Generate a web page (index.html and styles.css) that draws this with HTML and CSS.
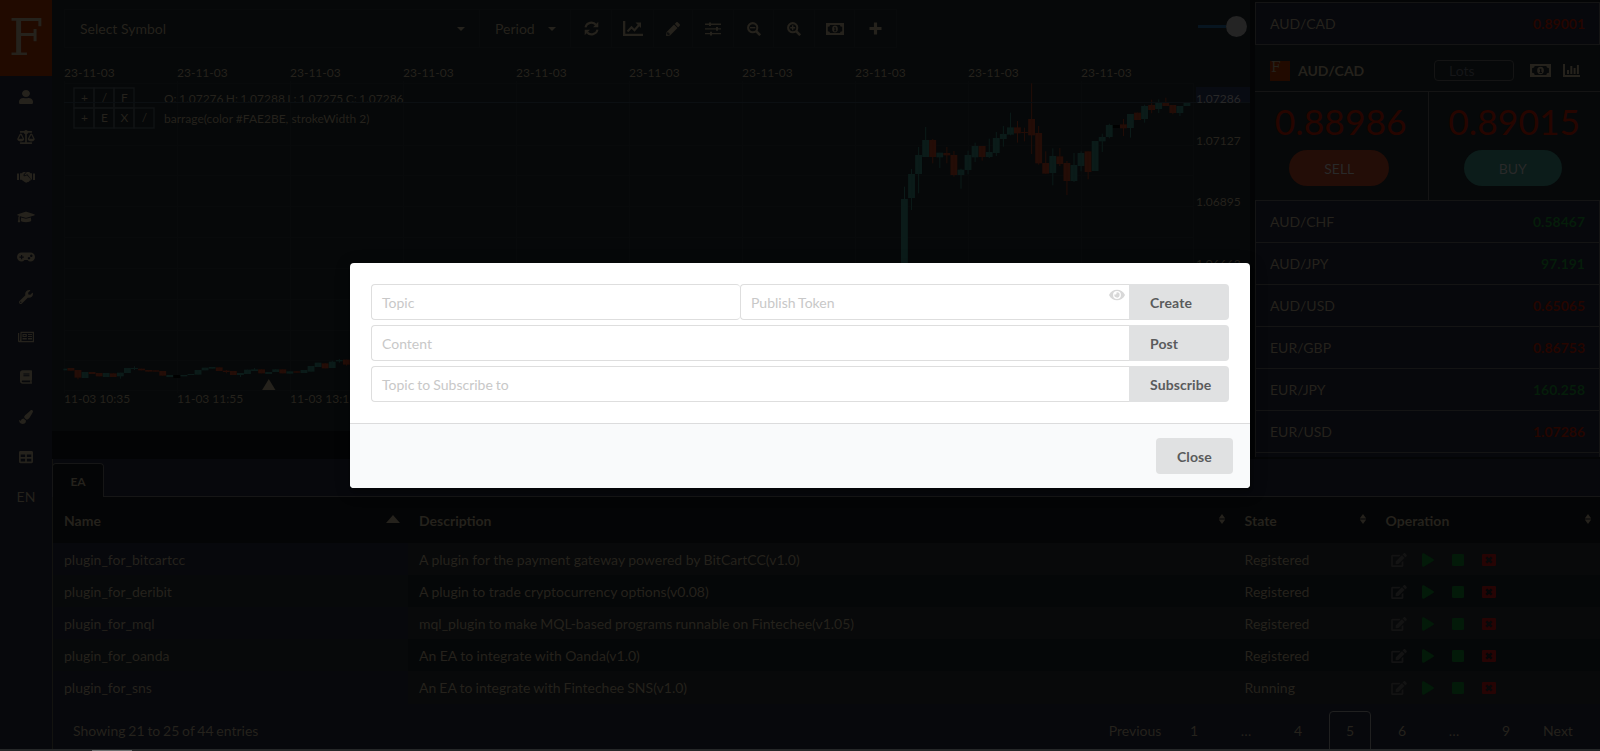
FILE: index.html
```html
<!DOCTYPE html>
<html lang="en">
<head>
<meta charset="utf-8">
<title>Fintechee</title>
<link rel="stylesheet" href="styles.css">
</head>
<body>
<svg class="defs" width="0" height="0">
  <symbol id="money" viewBox="0 0 20 14" preserveAspectRatio="none"><path fill-rule="evenodd" d="M0 0h20v14H0zM4.500 2.200Q4.500 4.500 2 4.500v5Q4.500 9.500 4.500 11.800h11Q15.500 9.500 18 9.500v-5Q15.500 4.500 15.500 2.200zM10 3a3.200 4 0 0 1 0 8a3.200 4 0 0 1 0-8zM9 5v1h.6v2.600H9v1h2.400v-1h-.6V5z"/></symbol>
  <symbol id="edit" viewBox="0 0 576 512"><path d="M402.600 83.200l90.200 90.200c3.800 3.800 3.800 10 0 13.800L274.400 405.600l-92.800 10.300c-12.400 1.400-22.900-9.100-21.500-21.500l10.300-92.800L388.800 83.200c3.800-3.800 10-3.800 13.800 0zm162-22.900l-48.800-48.800c-15.200-15.200-39.900-15.200-55.200 0l-35.400 35.400c-3.800 3.800-3.800 10 0 13.800l90.200 90.200c3.800 3.800 10 3.800 13.800 0l35.400-35.400c15.200-15.300 15.200-40 0-55.200zM384 346.200V448H64V128h229.800c3.200 0 6.200-1.300 8.500-3.500l40-40c7.600-7.600 2.200-20.500-8.500-20.500H48C21.500 64 0 85.500 0 112v352c0 26.500 21.500 48 48 48h352c26.500 0 48-21.500 48-48V306.200c0-10.700-12.900-16-20.500-8.500l-40 40c-2.200 2.300-3.500 5.300-3.500 8.500z"/></symbol>
  <symbol id="play" viewBox="0 0 448 512"><path d="M424.400 214.700L72.400 6.600C43.800-10.300 0 6.100 0 47.900V464c0 37.500 40.700 60.100 72.400 41.300l352-208c31.400-18.500 31.500-64.100 0-82.600z"/></symbol>
  <symbol id="stop" viewBox="0 0 12 12"><rect width="12" height="12" rx="1.200"/></symbol>
  <symbol id="close" viewBox="0 0 14 12"><path fill-rule="evenodd" d="M1 0h12a1 1 0 0 1 1 1v10a1 1 0 0 1-1 1H1a1 1 0 0 1-1-1V1a1 1 0 0 1 1-1zM5.200 2.500 3.500 4.200 5.300 6 3.500 7.800 5.200 9.500 7 7.700 8.800 9.500 10.500 7.800 8.700 6 10.500 4.200 8.800 2.500 7 4.300z"/></symbol>
  <symbol id="sort" viewBox="0 0 8 10"><path d="M4 0 7.300 4.500H.7zM4 10 .7 5.500h6.600z"/></symbol>
</svg>

<div class="app">
  <nav class="sidebar">
    <div class="logo">F</div>
    <div class="nav-item"><svg width="14" height="14" viewBox="0 0 448 448" preserveAspectRatio="none"><path transform="scale(1 .875)" d="M224 256c70.700 0 128-57.300 128-128S294.700 0 224 0 96 57.300 96 128s57.300 128 128 128zm89.600 32h-16.700c-22.200 10.200-46.900 16-72.900 16s-50.600-5.800-72.900-16h-16.700C60.200 288 0 348.200 0 422.400V464c0 26.500 21.500 48 48 48h352c26.500 0 48-21.500 48-48v-41.600c0-74.200-60.200-134.400-134.400-134.400z"/></svg></div>
    <div class="nav-item"><svg width="18" height="14" viewBox="0 0 640 512"><path d="M256 336h-.02c0-16.180 1.340-8.730-85.050-181.510-17.650-35.290-68.190-35.360-85.870 0C-2.060 328.750.02 320.330.02 336H0c0 44.180 57.310 80 128 80s128-35.820 128-80zM128 176l72 144H56l72-144zm511.980 160c0-16.180 1.340-8.730-85.050-181.510-17.650-35.290-68.190-35.360-85.870 0-87.120 174.260-85.040 165.840-85.040 181.510H384c0 44.180 57.310 80 128 80s128-35.820 128-80h-.02zM440 320l72-144 72 144H440zm88 128H352V153.250c23.510-10.290 41.160-31.480 46.390-57.250H528c8.840 0 16-7.160 16-16V48c0-8.840-7.160-16-16-16H383.640C369.040 12.680 346.090 0 320 0s-49.040 12.680-63.640 32H112c-8.840 0-16 7.160-16 16v32c0 8.840 7.160 16 16 16h129.610c5.230 25.760 22.870 46.960 46.390 57.250V448H112c-8.840 0-16 7.160-16 16v32c0 8.840 7.160 16 16 16h416c8.840 0 16-7.160 16-16v-32c0-8.840-7.160-16-16-16z"/></svg></div>
    <div class="nav-item"><svg width="18" height="14" viewBox="0 0 18 14"><path d="M0 3.500h2V10H0zM16 3.500h2V10h-2zM3 3.300h1.600L6.300 2H9L6.600 4.400Q6 6.200 7.800 6.300L10 5.200l3.800 4.100Q14 11 12.500 10.800 12 12.400 10.700 11.900 9.500 13.300 8 12.300L4.500 9.700H3zM9.800 2h2.400l1.500 1.300H15v6.400h-.5L10.300 4.200 7.900 5.500Q7.200 5.500 7.600 4.600z"/></svg></div>
    <div class="nav-item"><svg width="18" height="14" viewBox="0 0 640 512"><path d="M622.340 153.200L343.400 67.500c-15.200-4.670-31.600-4.670-46.790 0L17.660 153.200c-23.540 7.230-23.540 38.360 0 45.590l48.630 14.940c-10.670 13.190-17.230 29.280-17.880 46.900C38.780 266.150 32 276.110 32 288c0 10.780 5.680 19.850 13.860 25.650L20.330 428.530C18.110 438.520 25.710 448 35.940 448h56.110c10.240 0 17.840-9.480 15.620-19.470L82.140 313.650C90.320 307.850 96 298.780 96 288c0-11.570-6.470-21.250-15.660-26.870.76-15.020 8.440-28.300 20.690-36.720L296.600 284.500c9.060 2.780 26.440 6.250 46.790 0l278.950-85.700c23.550-7.240 23.550-38.360 0-45.600zM352.790 315.090c-28.530 8.760-52.840 3.920-65.590 0l-145.020-44.550L128 384c0 35.350 85.960 64 192 64s192-28.650 192-64l-14.180-113.470-145.030 44.560z"/></svg></div>
    <div class="nav-item"><svg width="18" height="14" viewBox="0 0 18 14"><path fill-rule="evenodd" d="M4.500 2.500h9a4.500 4.500 0 0 1 0 9q-1.900 0-3-1.500h-3q-1.100 1.500-3 1.500a4.500 4.500 0 0 1 0-9zM4 4.900v1.600H2.400v1.200H4v1.600h1.200V7.700h1.600V6.500H5.200V4.900zM12 7a1.200 1.200 0 1 0 .01 0zM14.300 4.600a1.200 1.200 0 1 0 .01 0z"/></svg></div>
    <div class="nav-item"><svg width="14" height="14" viewBox="0 0 512 512"><path d="M507.730 109.100c-2.240-9.030-13.540-12.090-20.120-5.510l-74.360 74.360-67.880-11.310-11.310-67.880 74.360-74.360c6.620-6.620 3.430-17.900-5.660-20.160-47.380-11.740-99.550.91-136.580 37.930-39.640 39.640-50.550 97.100-34.050 147.200L18.740 402.760c-24.990 24.990-24.990 65.510 0 90.500 24.990 24.990 65.510 24.990 90.500 0l213.210-213.210c50.120 16.710 107.470 5.680 147.370-34.220 37.070-37.070 49.700-89.320 37.910-136.730zM64 472c-13.250 0-24-10.750-24-24 0-13.260 10.750-24 24-24s24 10.740 24 24c0 13.250-10.750 24-24 24z"/></svg></div>
    <div class="nav-item"><svg width="16" height="14" viewBox="0 0 16 14"><path fill-rule="evenodd" d="M2.500 1.800H16v10.400H1.200Q0 12.200 0 11V3h1.200v7.500q.3.800.8 0zM3.600 3v8h11.200V3zM4.500 4h4.300v3H4.500zM5.600 5v1h2V5zM10 4h4v1.100h-4zM10 6h4v1.100h-4zM4.500 8.100h4.300v1.300H4.500zM10 8.100h4v1.300h-4z"/></svg></div>
    <div class="nav-item"><svg width="12" height="14" viewBox="0 0 448 512"><path d="M448 360V24c0-13.300-10.700-24-24-24H96C43 0 0 43 0 96v320c0 53 43 96 96 96h328c13.300 0 24-10.700 24-24v-16c0-7.500-3.500-14.300-8.900-18.700-4.200-15.400-4.200-59.300 0-74.700 5.400-4.300 8.900-11.100 8.900-18.600zM128 134c0-3.300 2.700-6 6-6h212c3.300 0 6 2.700 6 6v20c0 3.300-2.700 6-6 6H134c-3.300 0-6-2.700-6-6v-20zm0 64c0-3.300 2.700-6 6-6h212c3.300 0 6 2.700 6 6v20c0 3.300-2.700 6-6 6H134c-3.300 0-6-2.700-6-6v-20zm253.400 250H96c-17.700 0-32-14.300-32-32 0-17.600 14.400-32 32-32h285.400c-1.900 17.100-1.900 46.900 0 64z"/></svg></div>
    <div class="nav-item"><svg width="14" height="14" viewBox="0 0 512 512"><path d="M167.020 309.340c-40.120 2.580-76.530 17.860-97.190 72.300-2.350 6.210-8 9.980-14.590 9.980-11.110 0-45.460-27.670-55.250-34.350C0 439.620 37.930 512 128 512c75.860 0 128-43.770 128-120.190 0-3.110-.65-6.080-.97-9.130l-88.010-73.340zM457.890 0c-15.160 0-29.370 6.710-40.210 16.450C213.270 199.050 192 203.340 192 257.090c0 13.700 3.250 26.760 8.730 38.700l63.820 53.180c7.210 1.800 14.640 3.030 22.390 3.030 62.110 0 98.110-45.470 211.160-256.460 7.380-14.350 13.900-29.850 13.900-45.990C512 20.640 486 0 457.890 0z"/></svg></div>
    <div class="nav-item"><svg width="14" height="14" viewBox="0 0 512 512"><path d="M464 32H48C21.490 32 0 53.490 0 80v352c0 26.510 21.490 48 48 48h416c26.510 0 48-21.490 48-48V80c0-26.510-21.490-48-48-48zM224 416H64v-96h160v96zm0-160H64v-96h160v96zm224 160H288v-96h160v96zm0-160H288v-96h160v96z"/></svg></div>
    <div class="nav-item">EN</div>
  </nav>

  <div class="main">
    <div class="top">
      <section class="chart-panel">
        <div class="toolbar">
          <div class="tools">
            <div class="tool symbol"><span>Select Symbol</span><i class="caret"></i></div>
            <div class="tool period"><span>Period</span><i class="caret"></i></div>
            <div class="tool w41"><svg width="15" height="15" viewBox="0 0 15 15"><path class="line" stroke-width="2.100" d="M1.500 6.400A6 5.800 0 0 1 12 3.800M13.500 8.600A6 5.800 0 0 1 3 11.200"/><path d="M14.300.8v5.400H9zM.7 14.200V8.800H6z"/></svg></div>
            <div class="tool w42"><svg width="20" height="15" viewBox="0 0 20 15"><path d="M0 0h2.300v12.700H20V15H0zM12.500 1.500H18V7z"/><path class="line" stroke-width="2.200" d="M4.500 10.500 8.500 6.300 11.500 9.200 16 4"/></svg></div>
            <div class="tool w39"><svg width="14" height="14" viewBox="0 0 512 512"><path d="M497.900 142.100l-46.100 46.100c-4.700 4.700-12.300 4.700-17 0l-111-111c-4.700-4.700-4.700-12.300 0-17l46.100-46.100c18.700-18.700 49.100-18.700 67.900 0l60.100 60.100c18.800 18.700 18.800 49.100 0 67.900zM284.200 99.800L21.600 362.400.4 483.900c-2.900 16.400 11.400 30.600 27.800 27.800l121.500-21.300 262.600-262.600c4.700-4.700 4.700-12.300 0-17l-111-111c-4.800-4.700-12.400-4.700-17.100 0zM88 424h48v36.300l-64.500 11.300-31.100-31.100L51.700 376H88z"/></svg></div>
            <div class="tool w41"><svg width="16" height="14" viewBox="0 0 16 14"><path d="M0 1.500h16v1.400H0zM0 6.200h16v1.400H0zM0 10.900h16v1.400H0zM4 .4h2V4H4zM11 5h2v3.800h-2zM5 9.700h2v3.800H5z"/></svg></div>
            <div class="tool w40"><svg width="14" height="14" viewBox="0 0 14 14"><circle class="line" cx="5.700" cy="5.700" r="4.600" stroke-width="2.100"/><path class="line" stroke-width="2.600" d="M9 9l4.200 4.200"/><path d="M3 5h5.400v1.400H3z"/></svg></div>
            <div class="tool w41"><svg width="14" height="14" viewBox="0 0 14 14"><circle class="line" cx="5.700" cy="5.700" r="4.600" stroke-width="2.100"/><path class="line" stroke-width="2.600" d="M9 9l4.200 4.200"/><path d="M3.200 5H5V3.200h1.400V5h1.800v1.400H6.400v1.800H5V6.400H3.200z"/></svg></div>
            <div class="tool w40"><svg width="18" height="12"><use href="#money"/></svg></div>
            <div class="tool w41"><svg width="13" height="13" viewBox="0 0 13 13"><path d="M4.900.5h3.200v4.400h4.400v3.200H8.100v4.400H4.900V8.100H.5V4.900h4.400z"/></svg></div>
          </div>
          <div class="slider"><span class="track"></span><span class="thumb"></span></div>
        </div>
        <svg class="chart" id="chart" width="1198" height="374" viewBox="52 57 1198 374"></svg>
      </section>

      <aside class="quotes">
        <div class="quote"><span>AUD/CAD</span><b class="down">0.89001</b></div>
        <div class="ticket-head">
          <span class="mini-logo">F</span><b class="pair">AUD/CAD</b>
          <div class="lots">Lots</div>
          <svg class="cash" width="21" height="13"><use href="#money"/></svg>
          <svg class="bars" width="17" height="13" viewBox="0 0 17 13"><path d="M0 0h2v11h15v2H0zM4 6h2v4H4zM7.300 2h2v8h-2zM10.600 4h2v6h-2zM13.900 1h2v9h-2z"/></svg>
        </div>
        <div class="ticket">
          <div class="side sell"><span class="price">0.88986</span><span class="pill">SELL</span></div>
          <div class="side buy"><span class="price">0.89015</span><span class="pill">BUY</span></div>
        </div>
        <div class="quote"><span>AUD/CHF</span><b class="up">0.58467</b></div>
        <div class="quote"><span>AUD/JPY</span><b class="up">97.191</b></div>
        <div class="quote"><span>AUD/USD</span><b class="down">0.65065</b></div>
        <div class="quote"><span>EUR/GBP</span><b class="down">0.86753</b></div>
        <div class="quote"><span>EUR/JPY</span><b class="up">160.258</b></div>
        <div class="quote"><span>EUR/USD</span><b class="down">1.07286</b></div>
        <div class="quote rest"></div>
      </aside>
    </div>

    <section class="bottom">
      <div class="tabs"><div class="tab">EA</div><div class="tab-line"></div></div>
      <div class="table">
        <div class="row head">
          <div>Name<i class="asc"></i></div>
          <div>Description<svg width="8" height="10"><use href="#sort"/></svg></div>
          <div>State<svg width="8" height="10"><use href="#sort"/></svg></div>
          <div>Operation<svg width="8" height="10"><use href="#sort"/></svg></div>
        </div>
        <div class="row"><div>plugin_for_bitcartcc</div><div>A plugin for the payment gateway powered by BitCartCC(v1.0)</div><div>Registered</div><div class="ops"><svg class="e"><use href="#edit"/></svg><svg class="p"><use href="#play"/></svg><svg class="s"><use href="#stop"/></svg><svg class="c"><use href="#close"/></svg></div></div>
        <div class="row"><div>plugin_for_deribit</div><div>A plugin to trade cryptocurrency options(v0.08)</div><div>Registered</div><div class="ops"><svg class="e"><use href="#edit"/></svg><svg class="p"><use href="#play"/></svg><svg class="s"><use href="#stop"/></svg><svg class="c"><use href="#close"/></svg></div></div>
        <div class="row"><div>plugin_for_mql</div><div class="tight">mql_plugin to make MQL-based programs runnable on Fintechee(v1.05)</div><div>Registered</div><div class="ops"><svg class="e"><use href="#edit"/></svg><svg class="p"><use href="#play"/></svg><svg class="s"><use href="#stop"/></svg><svg class="c"><use href="#close"/></svg></div></div>
        <div class="row"><div>plugin_for_oanda</div><div>An EA to integrate with Oanda(v1.0)</div><div>Registered</div><div class="ops"><svg class="e"><use href="#edit"/></svg><svg class="p"><use href="#play"/></svg><svg class="s"><use href="#stop"/></svg><svg class="c"><use href="#close"/></svg></div></div>
        <div class="row"><div>plugin_for_sns</div><div class="tight">An EA to integrate with Fintechee SNS(v1.0)</div><div>Running</div><div class="ops"><svg class="e"><use href="#edit"/></svg><svg class="p"><use href="#play"/></svg><svg class="s"><use href="#stop"/></svg><svg class="c"><use href="#close"/></svg></div></div>
      </div>
      <div class="table-foot">
        <span class="info">Showing 21 to 25 of 44 entries</span>
        <div class="pages"><span class="prev">Previous</span><span>1</span><span>…</span><span>4</span><span class="current">5</span><span>6</span><span>…</span><span>9</span><span class="next">Next</span></div>
      </div>
    </section>
  </div>
</div>
<div class="scrollbar"><i></i></div>

<div class="dimmer">
  <div class="modal">
    <div class="content">
      <div class="field-row"><div class="input topic">Topic</div><div class="input token">Publish Token<svg width="16" height="14" viewBox="0 0 576 512"><path d="M572.520 241.400C518.290 135.590 410.930 64 288 64S57.680 135.640 3.480 241.410a32.350 32.350 0 0 0 0 29.190C57.710 376.410 165.070 448 288 448s230.320-71.640 284.520-177.410a32.350 32.350 0 0 0 0-29.190zM288 400a144 144 0 1 1 144-144 143.930 143.930 0 0 1-144 144zm0-240a95.310 95.310 0 0 0-25.310 3.790 47.850 47.850 0 0 1-66.900 66.900A95.780 95.780 0 1 0 288 160z"/></svg></div><div class="button">Create</div></div>
      <div class="field-row"><div class="input">Content</div><div class="button">Post</div></div>
      <div class="field-row"><div class="input">Topic to Subscribe to</div><div class="button">Subscribe</div></div>
    </div>
    <div class="actions"><div class="button close">Close</div></div>
  </div>
</div>
<script src="chart.js"></script>
</body>
</html>
```

FILE: styles.css
```css
* { box-sizing: border-box; }
html, body { height: 751px; overflow: hidden; }
body {
  margin: 0;
  display: flex;
  flex-direction: column;
  background: #030405;
  color: #25221c;
  font: 14px/18px Lato, "Liberation Sans", sans-serif;
}
svg { display: block; fill: currentColor; flex: none; }
.defs { position: absolute; }
.line { fill: none; stroke: currentColor; }

.app { display: flex; height: 749px; }
.scrollbar { height: 2px; background: #252728; padding: 1px 0 0 92px; }
.scrollbar i { display: block; width: 40px; height: 1px; background: #6c6e6f; }

.sidebar { width: 52px; background: #07080c; flex: none; }
.logo {
  height: 76px;
  margin-bottom: 1px;
  background: #210a00;
  font: 50px/76px "DejaVu Serif", serif;
  text-align: center;
}
.nav-item { height: 40px; display: flex; align-items: center; justify-content: center; }

.main { flex: 1; display: flex; flex-direction: column; min-width: 0; }
.top { display: flex; height: 459px; justify-content: space-between; }
.chart-panel { width: 1198px; height: 431px; background: #060809; }
.toolbar { height: 57px; padding: 9px 3px 0 12px; display: flex; justify-content: space-between; }
.tools { display: flex; height: 39px; border: 1px solid #080a0b; }
.tool { display: flex; align-items: center; justify-content: center; border-right: 1px solid #080a0b; }
.tool:last-child { border-right: 0; }
.symbol { width: 415px; justify-content: space-between; padding: 0 14px 0 15px; }
.period { width: 91px; justify-content: space-between; padding: 0 14px 0 15px; }
.caret { border: 4px solid transparent; border-top-color: currentColor; border-bottom: 0; }
.w39 { width: 39px; } .w40 { width: 40px; } .w41 { width: 41px; } .w42 { width: 42px; }
.slider { display: flex; align-items: center; height: 35px; }
.track { width: 28px; height: 3px; background: #071520; }
.thumb { width: 21px; height: 21px; border-radius: 50%; background: #242424; }

.chart text { font-size: 12px; fill: #25221c; }
.chart .tag { fill: #282828; }
.chart .ohlc { word-spacing: -0.75px; }
.grid { stroke: #080a0b; }
.rise { fill: #0b1b19; } .fall { fill: #240d07; } .flat { fill: #000; }
.key { fill: none; stroke: #111315; stroke-width: 1.4px; }

.quotes { width: 345px; padding-top: 2px; display: flex; flex-direction: column; background: #040506; overflow: hidden; }
.quote {
  height: 42px;
  flex: none;
  display: flex;
  align-items: center;
  justify-content: space-between;
  padding: 0 14px;
  border: 1px solid #141414;
  border-bottom: 0;
  background: #07080c;
}
.quote.rest { height: 5px; }
.up { color: #051d0a; }
.down { color: #250500; }
.ticket-head {
  height: 47px;
  flex: none;
  display: flex;
  align-items: center;
  padding: 5px 20px 0 15px;
  border-top: 1px solid #141414;
  background: #060809;
}
.mini-logo { width: 20px; height: 20px; background: #210a00; font: 14px/13px "DejaVu Serif", serif; padding-left: 1px; }
.pair { margin: 1px auto 0 8px; }
.lots { width: 80px; height: 21px; border: 1px solid #141414; border-radius: 4px; padding: 1px 14px; line-height: 18px; color: #151618; margin-right: 16px; }
.cash { margin: -1px 12px 0 0; }
.bars { margin-top: -1px; }
.ticket { height: 109px; display: flex; flex: none; border-top: 1px solid #141414; background: #060809; }
.side { flex: 1; display: flex; flex-direction: column; align-items: center; padding: 9px 4px 0 0; }
.side.sell { border-right: 1px solid #141414; }
.price { font-size: 35.5px; line-height: 42px; color: #260500; padding-left: 3px; }
.pill { width: 100px; height: 36px; margin-top: 7px; border-radius: 18px; background: #230d07; color: #292929; line-height: 38px; text-align: center; }
.buy { padding-right: 3px; }
.buy .pill { width: 98px; background: #0c1c1a; }

.bottom { flex: 1; background: #07080c; border-left: 1px solid #131310; }
.tabs { height: 38px; padding-top: 4px; display: flex; margin-left: -1px; }
.tab { width: 52px; border: 1px solid #161616; border-bottom: 0; border-radius: 4px 4px 0 0; background: #040506; font-size: 12px; font-weight: 700; line-height: 35px; text-align: center; }
.tab-line { flex: 1; border-bottom: 1px solid #161616; }
.row { display: grid; grid-template-columns: 355px 825.6px 141px 1fr; height: 32px; line-height: 33px; }
.row > div { padding-left: 11px; background: #050708; white-space: nowrap; word-spacing: -0.15px; }
.row > .tight { word-spacing: -0.5px; }
.row:nth-child(even) > div { background: #08090a; }
.row > div:first-child { background: #07090a; }
.row:nth-child(even) > div:first-child { background: #07080c; }
.row.head { height: 46px; line-height: 48px; font-weight: 700; }
.row.head > div, .row.head > div:first-child { background: #040506; display: flex; justify-content: space-between; padding-right: 8px; }
.head svg { margin-top: 17px; }
.asc { margin-top: 18px; height: 8px; border: 7px solid transparent; border-top: 0; border-bottom: 8px solid #25221c; }
.row .ops { display: grid; grid-template-columns: 31px 30px 30px 14px; padding: 1px 0 0 16.4px; align-items: center; }
.e { width: 16px; height: 14px; color: #131313; }
.p { width: 12px; height: 14px; color: #031a09; }
.s { width: 12px; height: 12px; color: #031a09; }
.c { width: 14px; height: 12px; color: #260404; }
.table-foot { height: 46px; padding: 8px 23px 0 20px; display: flex; justify-content: space-between; line-height: 40px; overflow: hidden; }
.info { word-spacing: -0.8px; }
.pages { display: flex; gap: 10px; text-align: center; }
.pages span { width: 42px; height: 44px; }
.pages .current { border: 1px solid #202020; border-radius: 4px; line-height: 38px; }
.pages .prev { width: 56px; }
.pages .next { width: 40px; padding-left: 2px; }

.dimmer { position: absolute; inset: 0; display: flex; align-items: center; justify-content: center; }
.modal { width: 900px; height: 225px; background: #fff; border-radius: 4px; overflow: hidden; box-shadow: 1px 3px 3px rgba(0,0,0,.2), 1px 3px 15px 2px rgba(0,0,0,.2); color: #5a5b5c; }
.content { height: 160px; padding: 21px; display: flex; flex-direction: column; gap: 5px; }
.field-row { display: flex; height: 36px; }
.input { flex: 1; border: 1px solid #dedede; border-right: 0; border-radius: 4px 0 0 4px; padding: 0 10px; line-height: 36px; color: #c8c8c8; word-spacing: -0.6px; }
.input.topic { flex: none; width: 369px; border-radius: 4px; }
.token { display: flex; justify-content: space-between; padding-right: 4px; }
.token svg { margin-top: 3px; color: #d8d8d8; }
.button { width: 100px; height: 36px; background: #e0e1e2; border-radius: 0 4px 4px 0; padding-left: 21px; font-weight: 700; line-height: 37px; letter-spacing: 0.1px; }
.actions { height: 65px; padding: 14px 17px; background: #f9fafb; border-top: 1px solid #dcdcdd; display: flex; justify-content: flex-end; }
.button.close { width: 77px; border-radius: 4px; }
```

FILE: chart.js
```js
const out = [];
const line = (x1, y1, x2, y2) => out.push(`<path class="grid" d="M${x1} ${y1}L${x2} ${y2}"/>`);
const text = (x, y, s, cls = '') => out.push(`<text x="${x}" y="${y}" class="${cls}">${s}</text>`);

for (let i = 0; i < 10; i++) {
  const x = 64.5 + i * 113;
  line(x, 81, x, 393);
  text(x - 0.5, 77, '23-11-03');
}
['11-03 10:35', '11-03 11:55', '11-03 13:15'].forEach((s, i) => text(64 + i * 113, 403, s));
[83.5, 145.5, 175.5, 206.5, 237.5, 268.5, 299.5, 330.5, 360.5, 390.5].forEach(y => line(64, y, 1194, y));
line(1193.5, 83, 1193.5, 391);
out.push('<rect x="1196" y="87" width="54" height="16" fill="#080b12"/>');
text(1196, 145, '1.07127');
text(1196, 206, '1.06895');
text(1196, 268, '1.06663');

// Each candle: [kind, body top, body bottom, wick top, wick bottom] in thirds of a pixel.
const late = [
  ['G',387,600,350,600],['G',312,384,297,420],['G',255,312,231,370],['G',210,261,171,261],['R',210,261,207,280],
  ['G',248,262,248,294],['R',249,256,231,280],['R',255,315,243,320],['G',299,315,296,356],['G',255,300,242,313],
  ['G',228,262,218,276],['R',228,261,228,272],['G',246,261,206,264],['G',204,249,186,258],['G',192,207,168,230],
  ['G',172,194,128,196],['R',172,190,153,218],['R',186,189,173,214],['R',147,196,40,252],['R',189,280,168,284],
  ['R',279,311,244,311],['G',258,309,235,346],['R',259,282,234,288],['R',279,333,273,375],['G',285,333,249,336],
  ['G',249,288,244,304],['R',244,306,244,328],['G',213,303,213,303],['G',201,214,191,246],['G',165,201,161,205],
  ['K',165,174,165,174],['R',163,175,147,198],['G',132,174,132,203],['R',128,150,128,150],['G',108,147,104,158],
  ['R',105,120,89,130],['G',98,117,88,129],['R',98,108,83,108],['R',105,129,105,133],['G',108,129,108,138],['G',98,108,98,108]
];
const early = [
  ['G',386,391],['R',384,392],['R',390,413,390,418],['G',396,414],['R',396,402],['R',399,409],['G',399,411],['R',400,411],
  ['G',398,409,398,416],['G',384,399],['G',384,387,379,390],['R',386,391],['R',390,395],['R',391,395],['R',393,407],['G',405,411],
  ['K',405,414],['G',405,409],['G',402,405],['G',390,404],['G',383,391],['G',381,386],['R',382,393],['R',392,396,390,400],
  ['R',393,405],['G',399,405,399,411],['G',389,402],['G',388,393,384,393],['R',388,400],['G',396,402],['G',388,396],['R',388,400],
  ['G',394,401],['R',394,398],['G',390,399],['G',378,395],['G',368,381],['R',370,385],['G',365,384,362,384],['G',360,364,357,368],['R',359,374,359,377]
];
const kinds = { G: 'rise', R: 'fall', K: 'flat' };
function candles(list, x0, y0) {
  list.forEach(([k, top, bottom, hi = top, lo = bottom], i) => {
    const x = x0 + i * 7.0625;
    out.push(`<g class="${kinds[k]}"><rect x="${Math.max(64, x)}" y="${y0 + top / 3}" width="${x < 64 ? 3.3 : 6.9}" height="${(bottom - top) / 3}"/><rect x="${x + 3}" y="${y0 + hi / 3}" width="1" height="${(lo - hi) / 3}"/></g>`);
  });
}
candles(late, 901, 70);
candles(early, 60.4, 240);
out.push('<path d="M268.800 379l6.700 11h-13.400z" fill="#25221c"/>');

// Indicator legends with their small key boxes.
[['+', '/', 'F'], ['+', 'E', 'X', '/']].forEach((row, r) => row.forEach((s, i) => {
  const x = 74 + i * 20, y = 88 + r * 20;
  out.push(`<rect class="key" x="${x}" y="${y}" width="20" height="20"/><text x="${x + 10.4}" y="${y + 14}" text-anchor="middle">${s}</text>`);
}));
out.push('<clipPath id="legend"><rect x="160" y="90" width="300" height="12"/></clipPath>');
out.push('<g clip-path="url(#legend)"><text class="ohlc" x="164" y="103">O: 1.07276 H: 1.07288 L: 1.07275 C: 1.07286</text></g>');
text(164, 123, 'barrage(color #FAE2BE, strokeWidth 2)');
out.push('<path d="M64 102.500H1250" stroke="#0b0f12"/>');
text(1196, 103, '1.07286', 'tag');
document.getElementById('chart').innerHTML = out.join('');
```
